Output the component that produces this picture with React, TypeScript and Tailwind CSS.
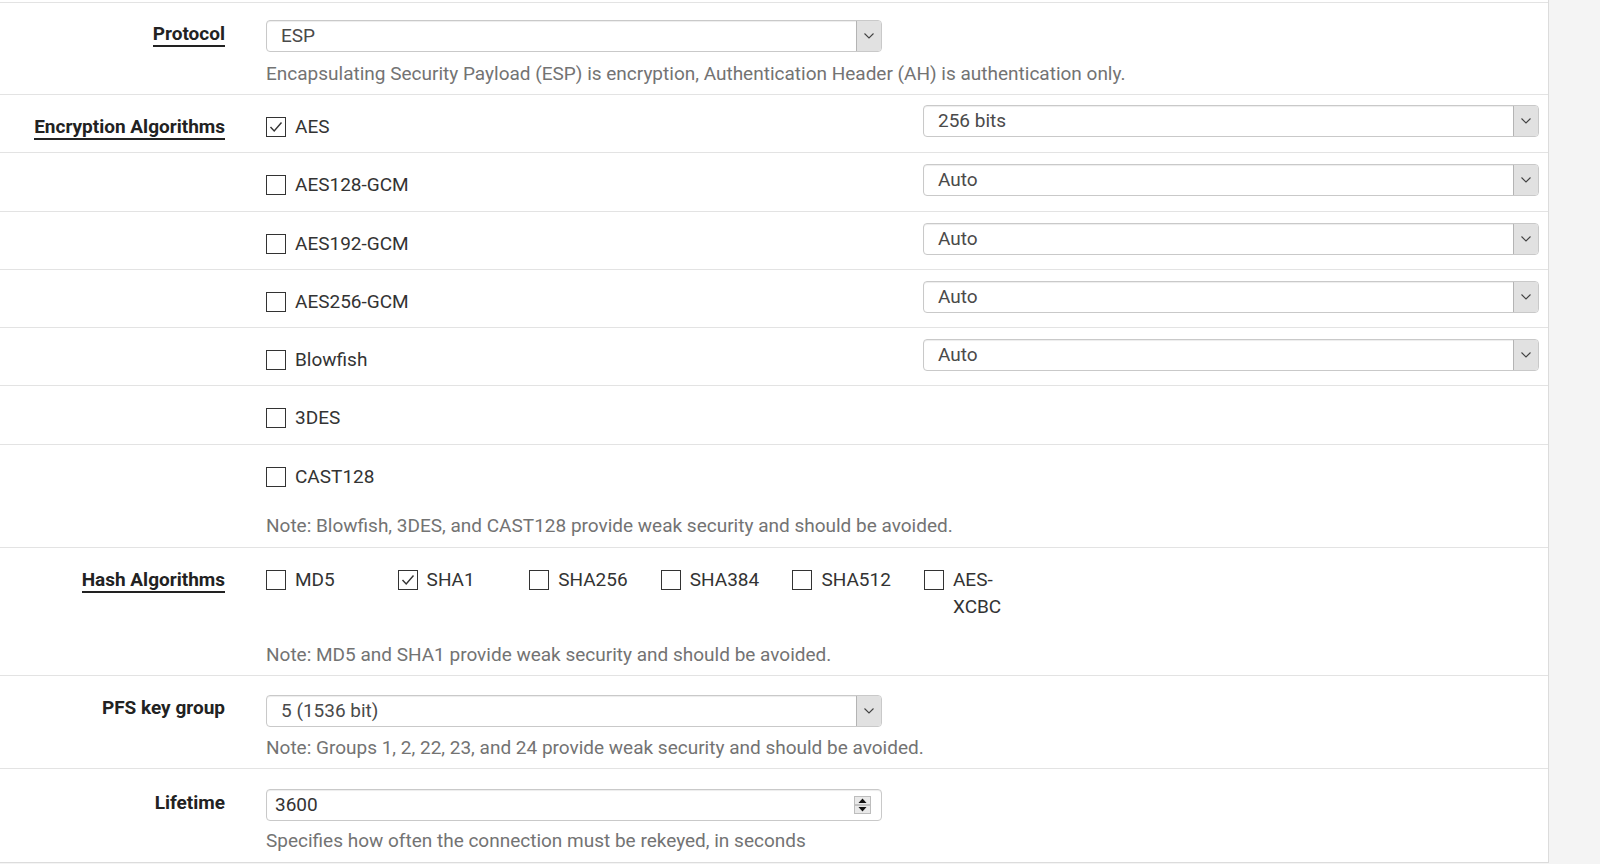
import React from "react";

const helpCls = "text-[19px] leading-[26.5px] text-[#737373]";

function Chevron() {
  return (
    <svg width="10" height="6" viewBox="0 0 10 6" className="block">
      <polyline points="0.5,0.5 5,5 9.5,0.5" fill="none" stroke="#444" strokeWidth="1.1" />
    </svg>
  );
}

function Select({ value, width }: { value: string; width: string }) {
  return (
    <div className={`${width} h-[32px] flex items-stretch border border-[#c9c9c9] rounded-[4px] bg-white shadow-[inset_0_1px_1px_rgba(0,0,0,0.075)] overflow-hidden`}>
      <div className="flex-1 flex items-center pl-[14px] text-[19px] text-[#4a4a4a]">{value}</div>
      <div className="w-[25px] flex items-center justify-center bg-[#e1e1e1] border-l border-[#b4b4b4]">
        <Chevron />
      </div>
    </div>
  );
}

function Check({ checked }: { checked?: boolean }) {
  return (
    <div className="w-[20px] h-[20px] shrink-0 border-[1.5px] border-[#333] bg-white flex items-center justify-center">
      {checked && (
        <svg width="14" height="12" viewBox="0 0 14 12">
          <polyline points="1.5,6 5.2,10 12.5,1.5" fill="none" stroke="#333" strokeWidth="1.4" />
        </svg>
      )}
    </div>
  );
}

function Label({ text, under, pt = "pt-[19px]" }: { text: string; under?: boolean; pt?: string }) {
  return (
    <div className={`w-[225px] shrink-0 text-right ${pt} text-[19px] leading-[26.5px] font-bold text-[#222]`}>
      <span className={under ? "border-b-2 border-[#222]" : ""}>{text}</span>
    </div>
  );
}

function CheckItem({ label, checked }: { label: string; checked?: boolean }) {
  return (
    <div className="flex items-start gap-[9px]">
      <div className="pt-[3px]">
        <Check checked={checked} />
      </div>
      <span className="text-[19px] leading-[26.5px] text-[#333]">{label}</span>
    </div>
  );
}

const encRows: { name: string; checked?: boolean; sel?: string; h: string; st: string }[] = [
  { name: "AES", checked: true, sel: "256 bits", h: "h-[58px]", st: "pt-[10px]" },
  { name: "AES128-GCM", sel: "Auto", h: "h-[59px]", st: "pt-[11px]" },
  { name: "AES192-GCM", sel: "Auto", h: "h-[58px]", st: "pt-[11px]" },
  { name: "AES256-GCM", sel: "Auto", h: "h-[58px]", st: "pt-[11px]" },
  { name: "Blowfish", sel: "Auto", h: "h-[58px]", st: "pt-[11px]" },
  { name: "3DES", h: "h-[59px]", st: "" },
];

const hashes = [
  { n: "MD5" },
  { n: "SHA1", c: true },
  { n: "SHA256" },
  { n: "SHA384" },
  { n: "SHA512" },
  { n: "AES-XCBC" },
];

export default function App() {
  return (
    <div className="min-h-screen bg-[#f4f4f4] font-['Roboto',sans-serif] flex">
      <div className="w-[1549px] bg-white border-r border-[#dcdcdc] self-start">
        <div className="h-[3px] border-b border-[#e3e3e3]" />

        {/* Protocol */}
        <div className="h-[92px] flex border-b border-[#e3e3e3]">
          <Label text="Protocol" under pt="pt-[18px]" />
          <div className="ml-[41px] pt-[17px]">
            <Select value="ESP" width="w-[616px]" />
            <div className={`${helpCls} mt-[9px]`}>
              Encapsulating Security Payload (ESP) is encryption, Authentication Header (AH) is authentication only.
            </div>
          </div>
        </div>

        {/* Encryption */}
        {encRows.map((r, i) => (
          <div key={r.name} className={`${r.h} flex border-b border-[#e3e3e3]`}>
            {i === 0 ? <Label text="Encryption Algorithms" under /> : <div className="w-[225px] shrink-0" />}
            <div className="ml-[41px] flex">
              <div className="w-[657px] pt-[19px]">
                <CheckItem label={r.name} checked={r.checked} />
              </div>
              {r.sel && (
                <div className={r.st}>
                  <Select value={r.sel} width="w-[616px]" />
                </div>
              )}
            </div>
          </div>
        ))}

        <div className="h-[103px] flex border-b border-[#e3e3e3]">
          <div className="w-[225px] shrink-0" />
          <div className="ml-[41px] pt-[19px]">
            <CheckItem label="CAST128" />
            <div className={`${helpCls} mt-[22px]`}>
              Note: Blowfish, 3DES, and CAST128 provide weak security and should be avoided.
            </div>
          </div>
        </div>

        {/* Hash */}
        <div className="h-[128px] flex border-b border-[#e3e3e3]">
          <Label text="Hash Algorithms" under />
          <div className="ml-[41px] pt-[19px]">
            <div className="flex">
              {hashes.map((h) => (
                <div key={h.n} className="w-[131.6px] shrink-0 flex items-start gap-[9px]">
                  <div className="pt-[3px]">
                    <Check checked={h.c} />
                  </div>
                  <span className="max-w-[80px] text-[19px] leading-[26.5px] text-[#333]">{h.n}</span>
                </div>
              ))}
            </div>
            <div className={`${helpCls} mt-[22px]`}>
              Note: MD5 and SHA1 provide weak security and should be avoided.
            </div>
          </div>
        </div>

        {/* PFS */}
        <div className="h-[93px] flex border-b border-[#e3e3e3]">
          <Label text="PFS key group" pt="pt-[19px]" />
          <div className="ml-[41px] pt-[19px]">
            <Select value="5 (1536 bit)" width="w-[616px]" />
            <div className={`${helpCls} mt-[8px]`}>
              Note: Groups 1, 2, 22, 23, and 24 provide weak security and should be avoided.
            </div>
          </div>
        </div>

        {/* Lifetime */}
        <div className="h-[94px] flex border-b border-[#dcdcdc]">
          <Label text="Lifetime" pt="pt-[21px]" />
          <div className="ml-[41px] pt-[20px]">
            <div className="w-[616px] h-[32px] flex items-center border border-[#c9c9c9] rounded-[4px] bg-white shadow-[inset_0_1px_1px_rgba(0,0,0,0.075)] pl-[8px] pr-[10px]">
              <span className="flex-1 text-[19px] text-[#333]">3600</span>
              <svg width="17" height="18" viewBox="0 0 17 18" className="block">
                <rect x="0.5" y="0.5" width="16" height="17" fill="#e9e9e9" stroke="#bdbdbd" />
                <line x1="1" y1="9" x2="16" y2="9" stroke="#9a9a9a" />
                <polygon points="4.5,7 8.5,2.5 12.5,7" fill="#111" />
                <polygon points="4.5,11 8.5,15.5 12.5,11" fill="#111" />
              </svg>
            </div>
            <div className={`${helpCls} mt-[7px]`}>
              Specifies how often the connection must be rekeyed, in seconds
            </div>
          </div>
        </div>
      </div>
    </div>
  );
}
